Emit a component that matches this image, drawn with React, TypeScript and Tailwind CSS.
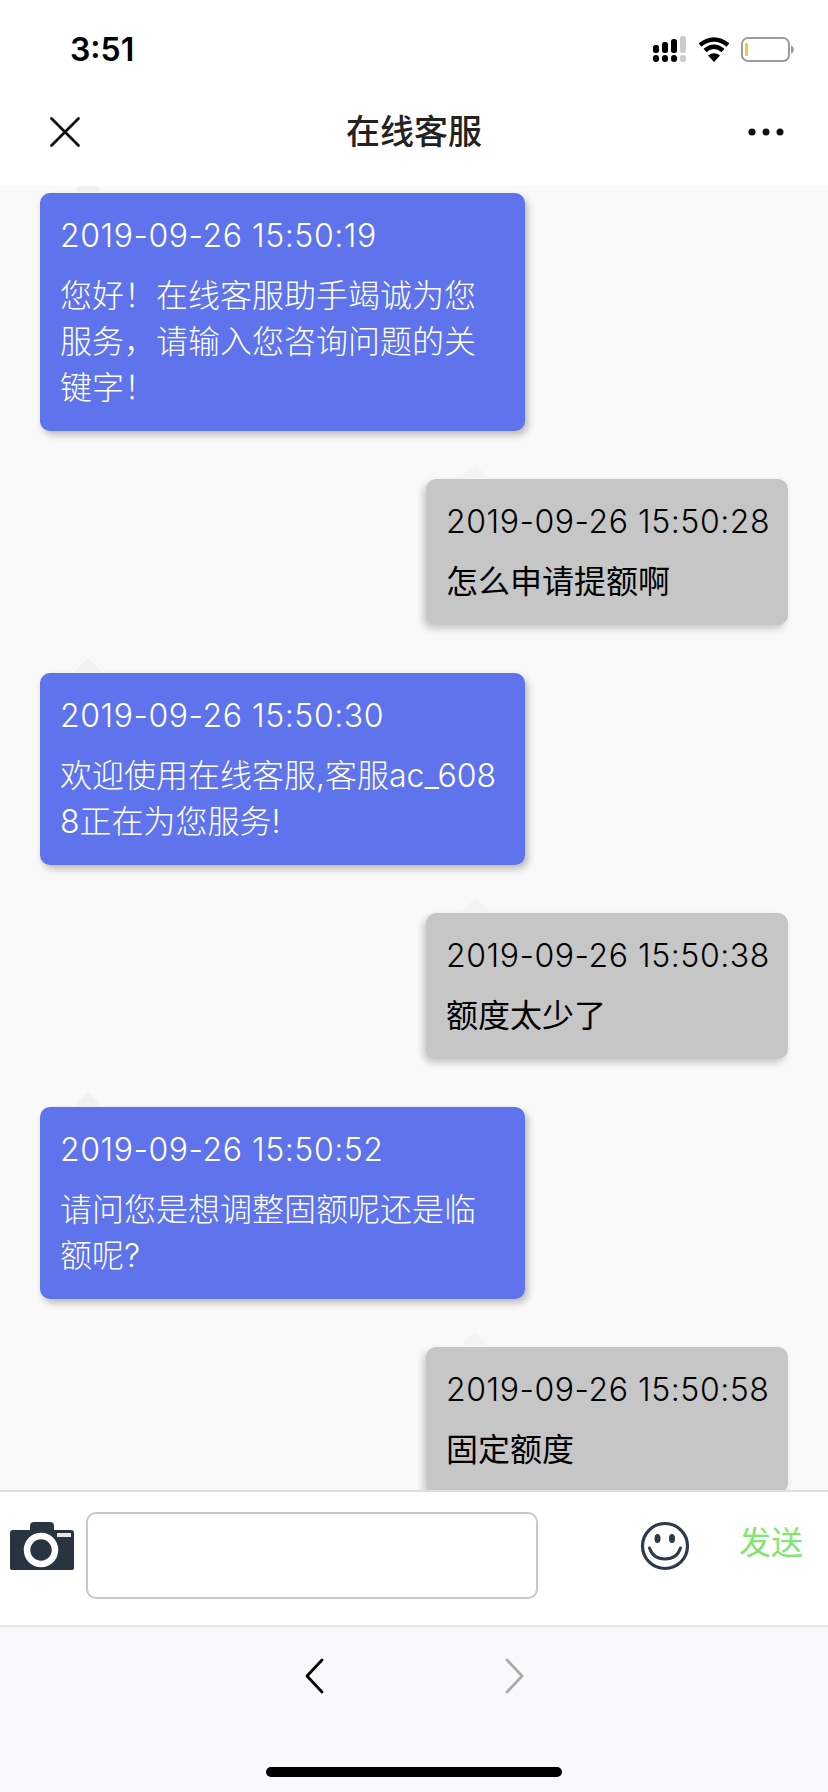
const sans = "font-['Inter','Noto_Sans_CJK_SC',sans-serif]";

type Msg = { time: string; text: string; mine?: boolean };

const messages: Msg[] = [
  { time: "2019-09-26 15:50:19", text: "您好！在线客服助手竭诚为您服务，请输入您咨询问题的关键字！" },
  { time: "2019-09-26 15:50:28", text: "怎么申请提额啊", mine: true },
  { time: "2019-09-26 15:50:30", text: "欢迎使用在线客服,客服ac_6088正在为您服务!" },
  { time: "2019-09-26 15:50:38", text: "额度太少了", mine: true },
  { time: "2019-09-26 15:50:52", text: "请问您是想调整固额呢还是临额呢?" },
  { time: "2019-09-26 15:50:58", text: "固定额度", mine: true },
];

function Bubble({ time, text, mine }: Msg) {
  return (
    <div className={mine ? "flex shrink-0 justify-end pr-[40px]" : "flex shrink-0 pl-[40px]"}>
      <div
        className={
          mine
            ? "relative w-[362px] rounded-[10px] bg-[#c6c6c6] px-[20px] py-[20px] font-normal text-black shadow-[-3px_4px_7px_rgba(0,0,0,0.2)]"
            : "relative w-[485px] rounded-[10px] bg-[#5f73ec] px-[20px] py-[20px] font-light text-white shadow-[3px_4px_7px_rgba(0,0,0,0.25)]"
        }
      >
        <div
          className={
            mine
              ? "absolute top-[-15px] left-[34px] h-0 w-0 border-x-[15px] border-b-[15px] border-x-transparent border-b-[#f4f4f4]"
              : "absolute top-[-15px] left-[33px] h-0 w-0 border-x-[15px] border-b-[15px] border-x-transparent border-b-[#f1f1f1]"
          }
        />
        <div className={mine ? "text-[32px] leading-[46px] font-light tracking-[0.55px] whitespace-nowrap" : "text-[32px] leading-[46px] tracking-[0.55px] whitespace-nowrap"}>{time}</div>
        <div className="mt-[14px] text-[32px] leading-[46px] break-all">{text}</div>
      </div>
    </div>
  );
}

function StatusBar() {
  return (
    <div className="flex h-[88px] items-center justify-between pt-[11px] pr-[33px] pl-[70px]">
      <span className="font-['Inter',sans-serif] text-[32px] font-semibold text-black">3:51</span>
      <svg width="142" height="28" viewBox="0 0 142 28" className="mt-[-2px]">
        {/* signal strength */}
        <rect x="0" y="10" width="6" height="8" rx="2.5" fill="#000" />
        <rect x="9" y="7" width="6" height="11" rx="2.5" fill="#000" />
        <rect x="18" y="4" width="6" height="14" rx="2.5" fill="#000" />
        <rect x="27" y="1" width="6" height="17" rx="2.5" fill="#ccc" />
        <rect x="0" y="20" width="6" height="7" rx="3" fill="#000" />
        <rect x="9" y="20" width="6" height="7" rx="3" fill="#000" />
        <rect x="18" y="20" width="6" height="7" rx="3" fill="#000" />
        <rect x="27" y="20" width="6" height="7" rx="2.5" fill="#ccc" />
        {/* wifi */}
        <path d="M47 10 Q61 -1 75 10" fill="none" stroke="#000" strokeWidth="4.5" />
        <path d="M52 15.500 Q61 8 70 15.500" fill="none" stroke="#000" strokeWidth="4.500" />
        <path d="M61 27 L55 20.500 Q61 16 67 20.500 Z" fill="#000" />
        {/* battery */}
        <rect x="89" y="3" width="47" height="23" rx="6" fill="#fff" stroke="#9b9b9b" strokeWidth="2" />
        <rect x="92" y="8" width="3" height="13" rx="1" fill="#f6c636" />
        <path d="M138 10 Q141 12 141 14.500 Q141 17 138 19 Z" fill="#9b9b9b" />
      </svg>
    </div>
  );
}

function TitleBar() {
  return (
    <div className="flex h-[98px] items-center justify-between pr-[44px] pb-[10px] pl-[50px]">
      <svg width="30" height="30" viewBox="0 0 30 30">
        <path d="M1.500 1.500 L28.500 28.500 M28.500 1.500 L1.500 28.500" stroke="#111" strokeWidth="2.800" strokeLinecap="round" />
      </svg>
      <span className="text-[34px] leading-[46px] font-medium text-[#222]">在线客服</span>
      <svg width="36" height="8" viewBox="0 0 36 8">
        <circle cx="4" cy="4" r="3.500" fill="#111" />
        <circle cx="18" cy="4" r="3.500" fill="#111" />
        <circle cx="32" cy="4" r="3.500" fill="#111" />
      </svg>
    </div>
  );
}

function Composer() {
  return (
    <div className="flex h-[135px] shrink-0 items-start border-t-2 border-[#dedede] bg-white pt-[20px]">
      <svg width="66" height="50" viewBox="0 0 66 50" className="mt-[10px] ml-[9px] shrink-0">
        <path d="M21 8 L21 4 Q21 0 25 0 L41 0 Q45 0 45 4 L45 8 L62 8 Q65 8 65 11 L65 46 Q65 48 62 48 L4 48 Q1 48 1 46 L1 11 Q1 8 4 8 Z" fill="#28343f" />
        <circle cx="32" cy="28" r="14" fill="#28343f" stroke="#fff" strokeWidth="6.500" />
        <rect x="48" y="11" width="14" height="4" fill="#e4e6e8" />
      </svg>
      <div className="ml-[11px] h-[87px] w-[452px] shrink-0 rounded-[10px] border-2 border-[#c8c8c8] bg-white" />
      <svg width="50" height="50" viewBox="0 0 50 50" className="mt-[9px] ml-[102px] shrink-0">
        <circle cx="25" cy="25" r="22.500" fill="none" stroke="#2c3a4a" strokeWidth="3.200" />
        <ellipse cx="17.500" cy="17.500" rx="3" ry="4.500" fill="#2c3a4a" />
        <ellipse cx="32" cy="17.500" rx="3" ry="4.500" fill="#2c3a4a" />
        <path d="M9.500 27 Q13 38 25 38 Q37 38 40.500 27" fill="none" stroke="#2c3a4a" strokeWidth="3" strokeLinecap="round" />
      </svg>
      <span className={`mt-[8px] ml-[49px] text-[32px] leading-[46px] whitespace-nowrap text-[#80e66f] ${sans}`}>发送</span>
    </div>
  );
}

function NavBar() {
  return (
    <div className="flex flex-1 flex-col items-center border-t-2 border-[#e8e8e8] bg-[#f9f9fb]">
      <div className="mt-[31px] flex items-center gap-[181px]">
        <svg width="20" height="36" viewBox="0 0 20 36">
          <path d="M18 2 L3 18 L18 34" fill="none" stroke="#000" strokeWidth="2.800" strokeLinecap="round" strokeLinejoin="round" />
        </svg>
        <svg width="20" height="36" viewBox="0 0 20 36">
          <path d="M2 2 L17 18 L2 34" fill="none" stroke="#aaa" strokeWidth="2.800" strokeLinecap="round" strokeLinejoin="round" />
        </svg>
      </div>
      <div className="mt-[73px] h-[10px] w-[296px] rounded-full bg-black" />
    </div>
  );
}

export default function App() {
  return (
    <div className={`flex h-[1792px] w-[828px] flex-col overflow-hidden bg-white ${sans}`}>
      <div className="shrink-0 bg-white">
        <StatusBar />
        <TitleBar />
      </div>
      <div className="flex h-[1304px] shrink-0 flex-col gap-[48px] overflow-hidden bg-[#f9f9f9] pt-[7px]">
        {messages.map((m) => (
          <Bubble key={m.time} {...m} />
        ))}
      </div>
      <Composer />
      <NavBar />
    </div>
  );
}
